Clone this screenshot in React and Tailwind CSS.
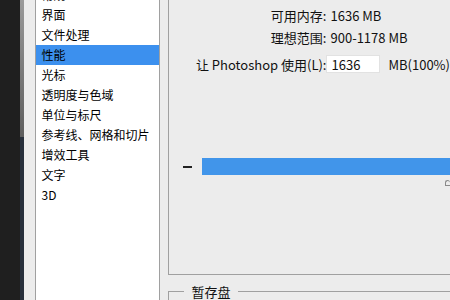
import React from 'react';

const items = ['常规', '界面', '文件处理', '性能', '光标', '透明度与色域', '单位与标尺', '参考线、网格和切片', '增效工具', '文字', '3D'];

const font = { fontFamily: '"Noto Sans CJK SC", "Noto Sans", sans-serif' };

const PrefList = () => (
  <div className="w-[125px] h-full border-x border-[#a0a0a0] bg-white overflow-hidden">
    <div className="-mt-[15px]">
      {items.map((name) => (
        <div
          key={name}
          className={`h-[20px] pl-[5px] flex items-center text-[12px] leading-none ${name === '性能' ? 'bg-[#3c90ee] text-black' : 'text-black'}`}
        >
          {name}
        </div>
      ))}
    </div>
  </div>
);

const MemoryGroup = () => (
  <div className="h-[275px] border-l border-b border-[#a0a0a0] flex flex-col">
    <div className="grid grid-cols-[157px_auto] gap-x-[4px] items-center text-[13px] text-[#111] leading-none pt-[5px]">
      <div className="text-right h-[21px] flex items-center justify-end">可用内存:</div>
      <div className="h-[21px] flex items-center">1636 MB</div>
      <div className="text-right h-[22px] flex items-center justify-end">理想范围:</div>
      <div className="h-[22px] flex items-center">900-1178 MB</div>
    </div>
    <div className="flex items-center mt-[7px] text-[13px] text-[#111] leading-none">
      <div className="w-[157px] text-right">让 Photoshop 使用(L):</div>
      <div className="w-[54px] h-[18px] bg-white border border-[#e2e2e2] flex items-center pl-[4px]">1636</div>
      <div className="ml-[8px] whitespace-nowrap">MB(100%)</div>
    </div>
    <div className="flex items-center mt-[85px] pl-[14px]">
      <div className="w-[9px] h-[2px] bg-[#222]" />
      <div className="ml-[10px] flex-1 h-[17px] bg-[#4195ea]" />
    </div>
    <div className="flex justify-end mt-[5px]">
      <div className="w-[5px] h-[6px] border border-[#8a8a8a] rounded-t-[3px] border-r-0" />
    </div>
  </div>
);

export default function App() {
  return (
    <div className="w-[450px] h-[300px] overflow-hidden flex bg-[#222222]" style={font}>
      <div className="w-[21px] h-full bg-[#1f1f1f]" />
      <div className="w-[4px] h-full flex flex-col">
        <div className="h-[137px] bg-gradient-to-b from-[#9a9a9a] to-[#5e5e5e]" />
        <div className="flex-1 bg-[#28303c]" />
      </div>
      <div className="w-px h-full bg-[#3a3a3a]" />
      <div className="flex-1 h-full bg-[#ececec] flex pl-[11px]">
        <PrefList />
        <div className="flex-1 ml-[8px] flex flex-col">
          <MemoryGroup />
          <fieldset className="mt-[10px] border-t border-l border-[#a0a0a0] flex-1 min-w-0">
            <legend className="ml-[15px] px-[7px] text-[13px] leading-none text-[#111]">暂存盘</legend>
          </fieldset>
        </div>
      </div>
    </div>
  );
}
